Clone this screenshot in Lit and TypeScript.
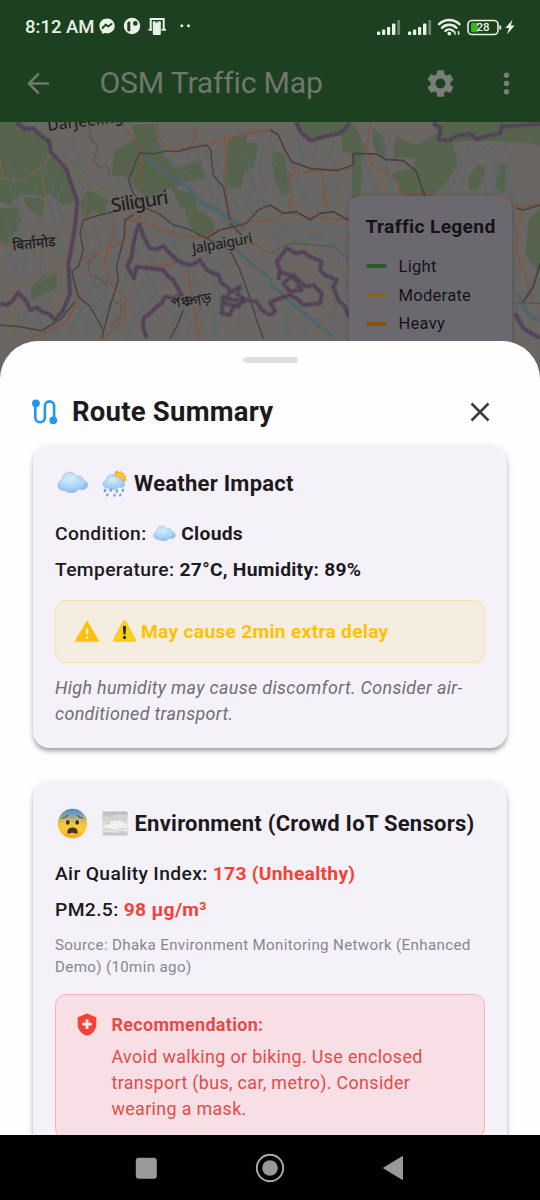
import { LitElement, html, svg, css } from "lit";
import { customElement } from "lit/decorators.js";

const BODY_FONT = css`Roboto, "Noto Sans", sans-serif`;

type Stroke = { c: string; w: number; d: string[] };

const WEST_FOREST = [
  "M0 6H55L120 50L150 60L165 130L205 170L225 240L190 250L150 215L130 225L60 215L30 250L0 240Z",
  "M0 270L50 265L60 300L25 365L0 360Z",
  "M75 235L130 240L125 285L90 265Z",
  "M345 95L410 60L400 20L460 15L470 70L490 110L520 150L600 125L610 170L540 190L500 205L470 235L430 225L385 170L340 160Z",
  "M690 60L735 50L740 110L720 200L680 205Z",
  "M95 505L140 465L165 460L165 500L100 535Z",
  "M265 215L320 240L310 280L275 270L255 300L245 250Z",
  "M515 195L540 215L580 225L590 270L545 260Z",
  "M560 275L610 280L635 305L640 340L600 350L575 320Z",
  "M745 70L770 75L760 140L742 150Z",
];
const WEST_WATER: Stroke[] = [
  { c: "#50656c", w: 14, d: ["M530 180L570 205L605 250L650 270L700 300L735 325"] },
  { c: "#50656c", w: 9, d: ["M700 380L740 420L790 460L815 480", "M430 110L480 150L530 180"] },
  {
    c: "#56686d",
    w: 4,
    d: [
      "M170 80L230 140L290 190L350 240L380 280",
      "M20 120L45 160L30 210L60 250L50 330L80 380L70 450L95 520L75 590L100 650",
      "M110 190L100 240L125 290L105 340L130 400L120 450L150 520",
      "M190 190L170 250L190 300L165 350L185 400",
      "M215 60L240 120L225 160L250 210",
      "M240 320L265 360L255 420L290 460L270 520L230 590L200 650",
      "M285 320L300 380L280 430",
      "M350 300L345 350L370 380L330 440L320 510L270 580L250 655",
      "M380 460L360 520L370 570L345 640",
      "M440 330L430 380L460 420L440 460L470 520L440 560",
      "M440 480L410 520L430 560L390 620L380 658",
      "M470 330L520 370L560 440L580 480L600 530L640 590L650 655",
      "M500 300L560 345L620 400L640 440L690 500",
      "M530 370L510 340L540 300",
      "M600 60L590 120L630 190L640 250",
      "M645 110L690 200L650 240L670 300L720 350",
      "M740 110L760 190L740 250L770 300",
      "M790 70L780 150L795 220L760 260",
      "M765 120L745 170L780 230L800 260",
      "M300 510L330 560L300 600L310 655",
      "M590 480L610 540L590 590L620 655",
      "M500 560L540 600L520 655",
      "M20 390L50 440L30 480",
      "M150 540L110 580L140 650",
      "M680 420L640 470L660 530L640 640",
      "M740 560L710 600L730 650",
      "M470 60L520 130L560 190",
      "M210 10L280 60L240 90",
      "M350 170L370 200L410 205L450 250",
      "M720 520L750 480L800 500",
      "M180 500L240 480L290 500L340 480",
      "M60 120L85 160L70 200L90 240",
      "M145 100L135 150L160 200L150 260L165 310",
      "M15 300L30 340L15 380",
      "M45 560L60 600L40 650",
      "M400 330L420 370L405 400",
      "M620 90L625 130L650 160L660 210",
      "M575 80L560 110L575 140",
      "M440 60L480 100L540 140L600 200",
      "M700 230L715 270L745 290L790 290",
      "M540 390L545 440L530 480",
      "M550 560L570 610L560 655",
      "M180 590L160 620L175 655",
    ],
  },
];
const WEST_ROADS: Stroke[] = [
  {
    c: "#7b6547",
    w: 4,
    d: [
      "M0 175L60 180L115 152L150 105L175 55",
      "M125 150L135 230L130 290L110 335",
      "M190 120L215 130L225 165L270 195L330 215L375 260",
      "M110 340L160 335L225 345",
      "M40 655L35 492L120 485L195 440L130 395L60 375",
      "M195 440L185 520L155 600",
      "M0 120L10 175",
      "M340 300L400 270L460 285L445 315",
      "M260 225L250 330",
    ],
  },
  {
    c: "#85543f",
    w: 4.5,
    d: [
      "M365 15L395 50L420 90L425 150L415 225L420 300",
      "M470 10L475 45L490 75L520 88L560 85L640 70L740 40L810 30",
      "M675 50L680 110L672 170L680 230L690 300L740 360L810 400",
      "M340 280L342 320L335 360L315 420L320 480L380 540L370 600L310 655",
      "M0 370L40 380",
      "M385 300L460 315L510 340L600 355L650 330L730 320L740 305L810 300",
      "M245 420L290 395L340 380L375 360L380 320",
      "M90 655L150 630L200 605L235 540L215 450",
      "M560 440L575 520L585 590L595 655",
      "M400 440L510 435L550 420",
      "M415 320L400 380L395 430",
      "M580 20L590 50L570 80",
    ],
  },
  {
    c: "#6b5049",
    w: 3.5,
    d: ["M265 15L275 60L295 80L280 120L300 140L320 135L330 165", "M290 405L265 425L270 465L300 475L320 495", "M330 540L365 555L360 590L330 620", "M690 375L730 360"],
  },
  {
    c: "#484544",
    w: 4.5,
    d: [
      "M420 95L385 180L400 220L440 265L475 280L520 315L560 325L620 355L660 330L740 310L775 270L810 255",
      "M420 98L460 102L500 93L530 95L570 85L620 75L632 90L640 165L670 200L690 300",
      "M340 275L300 285L250 300L240 340L250 390L235 440L215 455L235 530L270 560L310 630",
      "M400 285L375 300L372 350L350 440L355 480L330 560L305 655",
      "M0 615L60 620L125 632L185 595L225 545",
      "M620 355L690 390L720 450L745 520L770 600L790 655",
      "M550 570L530 620L510 655",
      "M690 310L725 345",
    ],
  },
];
const WEST_BORDER = [
  "M50 8L75 28L100 25L120 45L148 65L152 95L175 120L200 150L215 195L232 245L225 320L215 380L205 430L210 520L190 570L165 600L145 580L125 575L110 562L90 570L80 545L55 518L35 545L20 555L0 550",
  "M418 310L408 340L400 370L395 410L382 440L402 475L410 440L490 450L505 470L520 480L545 525L520 535L495 530L485 550L470 560L450 580L430 595L430 625L440 655",
  "M418 310L430 350L450 385L470 388L490 378L510 400L530 420L550 430L575 435L600 420L620 450L640 460L655 465L665 490L680 500L695 515L720 500L710 520L735 540L700 540L670 530L665 580L690 585L700 560L740 540L770 545L785 570L810 585",
  "M690 510L675 550L715 560L730 530",
];

const EAST_FOREST = [
  "M85 8L105 40L125 60L210 35L240 8Z",
  "M220 30L250 20L285 90L270 110L268 230L250 230L250 100L220 90Z",
  "M380 55L440 80L500 45L545 70L560 130L530 180L480 230L400 220L370 160L430 150L445 110L375 110Z",
  "M500 12L810 10V75L780 65L690 60L600 58L510 65Z",
  "M600 170L625 138L645 145L620 210L600 205Z",
  "M10 100L40 105L55 220L35 215L15 170Z",
  "M690 130L705 140L700 215L680 200Z",
  "M780 300L810 270V450L790 430L770 400Z",
  "M310 30L340 60L345 110L315 85Z",
];
const EAST_WATER: Stroke[] = [
  { c: "#50656c", w: 12, d: ["M0 490L40 525L100 580L190 650", "M740 520L780 590L810 600"] },
  {
    c: "#56686d",
    w: 4,
    d: [
      "M80 40L95 110L80 190L90 230L130 245",
      "M0 40L15 130L60 160L50 230",
      "M120 180L100 220L115 240",
      "M270 60L290 140L310 190L330 230",
      "M300 20L340 70L350 140L370 210",
      "M150 170L190 220L210 180L230 150",
      "M640 80L680 130L665 190L700 230",
      "M610 70L650 110L640 190L655 230",
      "M700 50L720 110L710 190L740 250",
      "M560 110L590 160L560 220",
      "M575 120L550 190L530 230",
      "M0 310L60 320L120 310L180 325L235 345",
      "M0 340L50 350L120 340L190 375L235 380",
      "M10 290L40 320L90 370L150 345L235 390",
      "M150 410L190 450L175 500L200 560L180 600L210 650",
      "M60 560L40 600L60 655",
      "M90 590L110 655",
      "M130 600L190 590L230 620",
      "M730 300L745 350L735 420L730 520",
      "M735 560L770 630",
      "M800 450L780 500L790 550",
      "M190 60L180 110L195 145",
      "M140 70L130 120L150 145",
      "M20 250L40 230L30 170",
      "M280 110L275 170L290 225",
      "M590 75L600 110L625 130",
      "M655 70L690 115L690 170",
      "M60 340L75 365L60 385",
      "M20 320L15 350L30 380",
      "M200 400L215 450L230 500",
    ],
  },
];
const EAST_ROADS: Stroke[] = [
  {
    c: "#7b6547",
    w: 4,
    d: [
      "M210 260L205 225L220 180L240 150",
      "M320 150L330 180L345 205L345 230",
      "M70 385L140 400L170 440L235 445",
      "M50 430L110 450L150 490L235 580",
      "M150 655L165 590L190 570",
      "M350 10L380 20",
    ],
  },
  {
    c: "#85543f",
    w: 4.5,
    d: [
      "M300 8L290 90L310 140L350 160L380 180L390 215L480 220",
      "M60 270L65 220L55 165L150 150L240 145",
      "M150 150L165 200L160 240L175 265",
      "M0 305L50 275L110 290L220 300",
      "M720 255L760 262L810 250",
      "M755 270L740 340L745 410L770 480L785 540",
      "M65 130L78 160",
    ],
  },
  {
    c: "#48413f",
    w: 5,
    d: [
      "M0 30L25 45L45 90L65 125L120 145L200 152L250 135L250 100L320 102L345 118L400 122L440 155L450 190L465 228",
      "M0 255L40 280L80 275L120 300L150 280L190 275L235 300",
      "M740 265L760 270L810 255",
      "M760 545L790 500L810 430",
    ],
  },
  { c: "#4b4f4d", w: 2.5, d: ["M0 400L60 370L100 372L190 380L235 415", "M730 548L810 550"] },
];
const EAST_BORDER = [
  "M78 8L95 40L122 62L160 50L210 40L240 10",
  "M490 10L512 25L508 60L540 60L560 48L600 42L620 58L650 48L690 40L695 20L810 12",
  "M0 585L15 575L0 545L60 525L80 535L100 555L150 550L155 520L130 495L110 500L95 490L70 465L40 490L60 515L95 510L80 490",
  "M25 480L30 450L20 425L50 385L80 400L100 395L120 410L155 425L150 450L165 465L200 480L190 500L205 540L225 560L235 590",
  "M25 455L60 465L90 490",
  "M735 580L760 625L810 655",
];

const strokes = (groups: Stroke[]) =>
  groups.map(
    (g) => svg`<g stroke=${g.c} stroke-width=${g.w} fill="none" stroke-linejoin="round">
      ${g.d.map((d) => svg`<path d=${d}></path>`)}
    </g>`
  );
const forest = (shapes: string[]) => svg`<g fill="#56634d" stroke="#56634d" stroke-width="8" stroke-linejoin="round">${shapes.map((d) => svg`<path d=${d}></path>`)}</g>`;
const border = (lines: string[]) => svg`
  <g stroke="#58465c" stroke-width="14" fill="none" stroke-linejoin="round" opacity=".8">
    ${lines.map((d) => svg`<path d=${d}></path>`)}
  </g>
  <g stroke="#4c3f51" stroke-width="5" fill="none" stroke-dasharray="14 4">
    ${lines.map((d) => svg`<path d=${d}></path>`)}
  </g>`;

@customElement("traffic-map")
class TrafficMap extends LitElement {
  static styles = css`
    :host { display: block; height: 260px; position: relative; overflow: hidden; background: #696663; }
    .map { display: block; width: 540px; height: 260px; }
    .legend {
      position: absolute; left: 349px; top: 74px; width: 163px; height: 180px; box-sizing: border-box;
      padding: 17px 16.5px; border-radius: 11px; background: #6c6870;
      box-shadow: 0 1px 4px rgba(0, 0, 0, .25); color: #151318; font-family: ${BODY_FONT};
    }
    .legend-title { font-size: 19.25px; line-height: 28px; font-weight: 700; letter-spacing: .3px; white-space: nowrap; margin-bottom: 11px; }
    .row { display: flex; align-items: center; height: 28.7px; font-size: 16.5px; letter-spacing: .3px; gap: 11.5px; }
    .swatch { width: 21.5px; height: 4px; border-radius: 2px; }
    .light { background: #265d2b; }
    .moderate { background: #836720; }
    .heavy { background: #895407; }
  `;
  render() {
    return html`
      <svg class="map" viewBox="0 122 540 260">
        <rect y="122" width="540" height="260" fill="#696663"></rect>
        <g transform="translate(0 120) scale(.33333)">
          ${forest(WEST_FOREST)}${strokes(WEST_WATER)}${strokes(WEST_ROADS)}${border(WEST_BORDER)}
        </g>
        <g transform="translate(270 120) scale(.33333)">
          ${forest(EAST_FOREST)}${strokes(EAST_WATER)}${strokes(EAST_ROADS)}${border(EAST_BORDER)}
        </g>
        <g fill="#222121" stroke="#6c6966" stroke-width="1.6" paint-order="stroke" font-family="Noto Sans, sans-serif" font-weight="500">
          <text x="48" y="131" font-size="15.5" transform="rotate(-7 48 131)">Darjeeling</text>
          <text x="112" y="212.5" font-size="19.5" textLength="58" transform="rotate(-9 112 212.5)">Siliguri</text>
          <text x="193" y="253.5" font-size="14.5" textLength="61" transform="rotate(-10 193 253.5)">Jalpaiguri</text>
          <text x="13" y="250.5" font-size="14.5" textLength="43" lengthAdjust="spacingAndGlyphs" transform="rotate(-6 13 250.5)" font-weight="600">बिर्तामोड</text>
          <text x="172" y="308.5" font-size="14" textLength="40" lengthAdjust="spacingAndGlyphs" transform="rotate(-8 172 308.5)" font-weight="600">পঞ্চগড়</text>
        </g>
      </svg>
      <div class="legend">
        <div class="legend-title">Traffic Legend</div>
        <div class="row"><span class="swatch light"></span>Light</div>
        <div class="row"><span class="swatch moderate"></span>Moderate</div>
        <div class="row"><span class="swatch heavy"></span>Heavy</div>
      </div>
    `;
  }
}

const signal = () => html`<svg class="signal" width="25" height="17" viewBox="0 0 25 17">
  <g fill="#e9f2e7">
    <rect x="1" y="12.5" width="3.2" height="3.5" rx=".8"></rect>
    <rect x="6" y="10.5" width="3.2" height="5.5" rx=".8"></rect>
    <rect x="11" y="8" width="3.2" height="8" rx=".8"></rect>
    <rect x="16" y="4.5" width="3.4" height="11.5" rx=".8"></rect>
    <rect x="21.3" y="1" width="2.8" height="15" rx=".8" opacity=".38"></rect>
  </g></svg>`;

@customElement("top-bar")
class TopBar extends LitElement {
  static styles = css`
    :host { display: block; height: 122px; background: #1d4020; font-family: ${BODY_FONT}; }
    svg { display: block; flex: none; }
    .status { display: flex; align-items: center; height: 54px; padding: 0 25px 0 25px; box-sizing: border-box; color: #e9f2e7; }
    .time { font-size: 18.5px; font-weight: 500; letter-spacing: 0; width: 74px; white-space: nowrap; line-height: 22px; }
    .notify { display: flex; align-items: center; flex: 1; }
    .battery { display: flex; align-items: center; justify-content: center; position: relative; width: 36px; height: 17px; margin: 0 2.500px 0 4.500px; }
    .battery svg { position: absolute; left: 0; top: 0; }
    .level { position: relative; font-size: 11.5px; line-height: 17px; font-weight: 500; margin-right: 3px; }
    .signal { margin-right: 5.500px; }
    .bar { display: flex; align-items: center; height: 58px; color: #71766f; }
    .back { margin-left: 26px; }
    .title { flex: 1; margin-left: 47.5px; font-size: 30.25px; line-height: 36px; letter-spacing: -.23px; }
    .gear { margin-right: 33px; }
    .more { margin-right: 17px; }
  `;
  render() {
    return html`
      <div class="status">
        <span class="time">8:12 AM</span>
        <div class="notify">
          <svg width="96" height="20" viewBox="0 0 96 20">
            <path fill="#e9f2e7" d="M8 1.5C3.5 1.5.4 4.7.4 9c0 2.300.9 4.200 2.400 5.500L3 17l2.500-1.100c.8.2 1.600.3 2.500.3 4.500 0 7.700-3.100 7.700-7.300S12.500 1.500 8 1.500z"></path>
            <path d="M3.600 11L6.700 7.600 9.100 9.400 12.600 6.900" fill="none" stroke="#1d4020" stroke-width="1.900" stroke-linejoin="round" stroke-linecap="round"></path>
            <circle cx="33" cy="9" r="8.200" fill="#e9f2e7"></circle>
            <path d="M31.300 4.500v9.800h-1.700a1.300 1.300 0 0 1-1.300-1.300V6a1.500 1.500 0 0 1 1.500-1.500z" fill="#1d4020"></path>
            <circle cx="36.300" cy="6.400" r="2.300" fill="#1d4020"></circle>
            <path d="M51.700 12V2h13v10" fill="none" stroke="#e9f2e7" stroke-width="2"></path>
            <path d="M49.500 12.800h17.500" stroke="#e9f2e7" stroke-width="1.800"></path>
            <rect x="53" y="4" width="9.500" height="14" fill="#1d4020"></rect>
            <rect x="53.800" y="4.300" width="8" height="13.700" rx="1" fill="#e9f2e7"></rect>
            <path d="M56 5h3.500" stroke="#1d4020" stroke-width="1"></path>
            <circle cx="82.800" cy="8.700" r="1.500" fill="#e9f2e7"></circle>
            <circle cx="89.500" cy="8.700" r="1.500" fill="#e9f2e7"></circle>
          </svg>
        </div>
        ${signal()}${signal()}
        <svg width="25" height="18" viewBox="0 0 25 18">
          <g fill="none" stroke="#e9f2e7" stroke-width="2.400" stroke-linecap="round">
            <path d="M2 6.200a14.500 14.500 0 0 1 20.500 0"></path>
            <path d="M5 9.800a10.300 10.300 0 0 1 14.500 0"></path>
            <path d="M8.300 13a5.800 5.800 0 0 1 8 0"></path>
          </g>
          <circle cx="12.300" cy="15.600" r="1.900" fill="#e9f2e7"></circle>
          <path d="M18 16.800v-3.500M21.500 13v3.700M17 15l1-1.500M22.500 15l-1 1.500" stroke="#e9f2e7" stroke-width="1.300"></path>
        </svg>
        <div class="battery">
          <svg width="36" height="17" viewBox="0 0 36 17">
            <rect x="1" y="1.500" width="30" height="14" rx="4" fill="none" stroke="#e9f2e7" stroke-width="1.600"></rect>
            <path d="M6 3.700h5v9.600H6a2 2 0 0 1-2-2V5.700a2 2 0 0 1 2-2z" fill="#3bb51c"></path>
            <path d="M33.300 6.500v4" stroke="#e9f2e7" stroke-width="1.800"></path>
          </svg>
          <span class="level">28</span>
        </div>
        <svg width="10" height="16" viewBox="0 0 10 16"><path d="M7.500.8L.3 9h3.800L2 15.300 9.700 6.600H5.900z" fill="#e9f2e7"></path></svg>
      </div>
      <div class="bar">
        <svg class="back" width="26" height="26" viewBox="0 0 26 26"><path d="M23 13.500H3.500M12.800 3.500L2.900 13.500 12.800 23.500" fill="none" stroke="#71766f" stroke-width="2.500"></path></svg>
        <span class="title">OSM Traffic Map</span>
        <svg class="gear" width="33" height="33" viewBox="0 0 24 24"><path fill="#7b7d7a" d="M19.140 12.940c.04-.3.060-.61.060-.94 0-.32-.02-.64-.07-.94l2.030-1.580c.18-.14.230-.41.120-.61l-1.920-3.320c-.12-.22-.37-.29-.59-.22l-2.390.96c-.5-.38-1.030-.7-1.620-.94l-.36-2.540c-.04-.24-.24-.41-.48-.41h-3.840c-.24 0-.43.170-.47.410l-.36 2.540c-.59.240-1.130.57-1.620.94l-2.390-.96c-.22-.08-.47 0-.59.220L2.740 8.870c-.12.210-.08.470.12.610l2.030 1.580c-.05.300-.09.630-.09.940s.02.640.07.94l-2.030 1.580c-.18.140-.23.410-.12.610l1.920 3.320c.12.220.37.290.59.220l2.390-.96c.5.380 1.030.7 1.620.94l.36 2.540c.05.240.24.410.48.410h3.840c.24 0 .44-.17.470-.41l.36-2.540c.59-.24 1.130-.56 1.620-.94l2.390.96c.22.080.47 0 .59-.22l1.920-3.320c.12-.22.070-.47-.12-.61l-2.010-1.580zM12 15.600c-1.980 0-3.600-1.620-3.600-3.600s1.620-3.600 3.600-3.600 3.600 1.620 3.600 3.600-1.620 3.600-3.600 3.600z"></path></svg>
        <svg class="more" width="33" height="33" viewBox="0 0 24 24"><g fill="#7b7d7a"><circle cx="12" cy="6" r="2"></circle><circle cx="12" cy="12" r="2"></circle><circle cx="12" cy="18" r="2"></circle></g></svg>
      </div>
    `;
  }
}

const cloudPath = "M8 20C3.500 20 .8 17.800.8 14.500c0-2.700 1.800-4.700 4.300-5.100C5.200 4.500 8.200 1.300 12.500 1.300c3.300 0 5.700 1.500 7 3.900 4-.9 7 1.200 7.400 4.300 2.600.5 4.200 2.200 4.200 4.500 0 3-2.400 5-5.800 5-1.300 0-2.300-.2-3.200-.7-1.700 2.400-4.200 3.700-7.400 3.700-2.900 0-5.300-.7-6.700-2z";

const cloud = (w: number) => html`<svg width=${w} height=${(w * 24) / 32} viewBox="0 0 32 24">
  <defs><radialGradient id="sky" cx=".42" cy=".3" r=".75"><stop offset="0" stop-color="#d8eefc"></stop><stop offset=".6" stop-color="#a9d4f8"></stop><stop offset="1" stop-color="#7fb5ea"></stop></radialGradient></defs>
  <path d=${cloudPath} fill="url(#sky)" stroke="#9dbfdc" stroke-width=".7"></path>
  <path d="M5.300 10c1-1.200 3-1.700 4.700-.8M19.300 5.500c-1 .5-1.700 1.200-2 2.200M26.800 9.700c.1 1.900-.8 3.500-2.600 4.100" fill="none" stroke="#e6f4fd" stroke-width=".9" opacity=".5"></path>
</svg>`;

const rainCloud = () => html`<svg width="25" height="27" viewBox="0 0 25 27">
  <path fill="#f7a823" d="M15.500.5l1.500 2L19 .8l.9 2.500 2.600-.6-.4 2.700 2.500.6-1.500 2.100 1.500 1.900-2.200 1.200.4 2.300-5 .5-8-6 .5-3.700 2.600.3.100-2.800z"></path>
  <circle cx="17.300" cy="7.800" r="5" fill="#fdc436"></circle>
  <defs><radialGradient id="rain" cx=".45" cy=".35" r=".7"><stop offset="0" stop-color="#d8eefc"></stop><stop offset="1" stop-color="#8cc1ef"></stop></radialGradient></defs>
  <path transform="translate(.4 3.800) scale(.72)" d=${cloudPath} fill="url(#rain)" stroke="#92bde2" stroke-width=".8"></path>
  <g fill="#6aa3da"><ellipse cx="3" cy="20.500" rx="1.200" ry="1.800" transform="rotate(25 3 20.500)"></ellipse><ellipse cx="8.800" cy="20.200" rx="1.200" ry="1.800" transform="rotate(25 8.800 20.200)"></ellipse><ellipse cx="14.800" cy="21" rx="1.200" ry="1.800" transform="rotate(25 14.800 21)"></ellipse><ellipse cx="20.800" cy="20.200" rx="1.200" ry="1.800" transform="rotate(25 20.800 20.200)"></ellipse><ellipse cx="5.300" cy="25" rx="1.100" ry="1.600" transform="rotate(25 5.300 25)"></ellipse><ellipse cx="12.500" cy="25.300" rx="1.100" ry="1.500" transform="rotate(25 12.500 25.300)"></ellipse><ellipse cx="18.300" cy="25" rx="1.100" ry="1.600" transform="rotate(25 18.300 25)"></ellipse></g>
</svg>`;

const fearfulFace = () => html`<svg width="31" height="31" viewBox="0 0 31 31">
  <defs><linearGradient id="face" x1="0" y1="0" x2="0" y2="1"><stop offset="0" stop-color="#4b88d4"></stop><stop offset=".22" stop-color="#86a3ac"></stop><stop offset=".5" stop-color="#f0c63c"></stop><stop offset=".72" stop-color="#fecb31"></stop><stop offset="1" stop-color="#f1a522"></stop></linearGradient></defs>
  <circle cx="15.500" cy="15.500" r="14.700" fill="url(#face)"></circle>
  <path d="M5.500 10c2-.1 3.800-1 5-2.500M25.500 10c-2-.1-3.800-1-5-2.500" fill="none" stroke="#4e4430" stroke-width="1.200" stroke-linecap="round"></path>
  <ellipse cx="10.800" cy="14.300" rx="2.700" ry="2.900" fill="#f6dc8e"></ellipse><ellipse cx="20.200" cy="14.300" rx="2.700" ry="2.900" fill="#f6dc8e"></ellipse>
  <ellipse cx="10.800" cy="14.400" rx="2" ry="2.300" fill="#44331f"></ellipse><ellipse cx="20.200" cy="14.400" rx="2" ry="2.300" fill="#44331f"></ellipse>
  <path d="M10.500 25c-.6-3.300 1.500-5.500 5-5.500s5.600 2.200 5 5.500c-.2 1-1 .9-1.800.5-1.800-.9-4.600-.9-6.400 0-.8.400-1.600.5-1.800-.5z" fill="#493323"></path>
</svg>`;

const fog = () => html`<svg width="26" height="25" viewBox="0 0 26 25">
  <defs><linearGradient id="fog" x1="0" y1="0" x2="0" y2="1"><stop offset="0" stop-color="#b9b9bb"></stop><stop offset=".5" stop-color="#dededf"></stop><stop offset="1" stop-color="#c5c5c7"></stop></linearGradient></defs>
  <rect x=".5" y=".5" width="25" height="24" fill="url(#fog)"></rect>
  <path d="M0 6c4-3 8 2 12-1s8 0 14-2v3c-5 2-8 0-12 2S5 7 0 10z" fill="#d3d3d4"></path>
  <path d="M1 16c1-3 4-4 6-3 1-4 5-5 8-3 3-2 6 0 6 2 2 0 3 1 4 2v4c-4-2-8-1-11 1-4 0-8-4-13-1z" fill="#f0f0f1"></path>
  <path d="M1 16c1-3 4-4 6-3 1-4 5-5 8-3" fill="none" stroke="#c3c3c5" stroke-width=".7"></path>
  <path d="M1 21c6-4 9 2 14-1 4-2 7-1 10 0" stroke="#e9e9ea" stroke-width="1.600" fill="none"></path>
</svg>`;

@customElement("app-root")
class AppRoot extends LitElement {
  static styles = css`
    :host { display: grid; grid-template-rows: 122px 1013px 65px; width: 540px; height: 1200px; overflow: hidden; font-family: ${BODY_FONT}; color: #1c1a20; background: #000; }
    svg { display: block; flex: none; }
    .stage { display: grid; grid-template: 1fr / 1fr; overflow: hidden; min-height: 0; }
    .stage > * { grid-area: 1 / 1; min-width: 0; }
    .sheet { margin-top: 218.500px; position: relative; background: #fefefe; border-radius: 38px 38px 0 0; overflow: hidden; padding: 16.500px 33px 0; min-height: 0; height: 794.500px; box-sizing: border-box; }
    .handle { width: 55px; height: 5.500px; border-radius: 3px; background: #e0e0e0; margin: 0 auto; }
    .head { display: flex; align-items: center; height: 50px; margin-top: 24px; padding: 0 16.500px 0 0; }
    .head .route { margin-left: -1px; }
    .head h1 { flex: 1; margin: 0 0 0 14px; font-size: 27.500px; line-height: 36px; font-weight: 700; letter-spacing: .22px; }
    .card { background: #f5f1f9; border-radius: 16.500px; padding: 22px; box-sizing: border-box; box-shadow: 0 4px 4px -1px rgba(0, 0, 0, .28), 0 2px 7px rgba(0, 0, 0, .16); }
    .weather { margin-top: 9px; height: 302.500px; }
    .env { margin-top: 34px; height: 420px; padding-top: 25.500px; }
    .card-title { display: flex; align-items: center; height: 31px; font-size: 22px; font-weight: 700; letter-spacing: .24px; white-space: nowrap; }
    .card-title .lead { margin-left: 1.500px; }
    .card-title .mini { margin: 0 7px 0 14px; }
    .line { display: flex; align-items: center; height: 28px; font-size: 19.250px; font-weight: 500; letter-spacing: .36px; white-space: pre; }
    .line b { font-weight: 700; letter-spacing: .28px; }
    .line svg { margin: 0 5.500px 0 1px; }
    .weather .line { margin-top: 8px; }
    .weather .line.first, .env .line.first { margin-top: 21px; }
    .env .line { margin-top: 8px; }
    .red { color: #f44336; }
    .alert { display: flex; align-items: center; margin-top: 16px; height: 63px; box-sizing: border-box; padding: 0 17.500px; border: 1.400px solid #fbdf9f; border-radius: 11px; background: #f6ede1; color: #ffc107; font-size: 19.250px; font-weight: 700; letter-spacing: .26px; white-space: nowrap; }
    .alert .tri { margin: 0 5.500px 0 13px; }
    .note { margin: 12px 0 0; font-size: 17.900px; line-height: 26.200px; font-style: italic; color: #706d73; letter-spacing: .35px; }
    .source { margin: 10.500px 0 0; font-size: 15.125px; line-height: 22px; color: #88868b; letter-spacing: .35px; white-space: nowrap; }
    .advice { display: flex; margin-top: 16px; height: 145px; box-sizing: border-box; padding: 17px 20px; border: 1.400px solid #f4b4b8; border-radius: 11px; background: #f7dfe5; color: #f44336; }
    .advice-text { margin-left: 13.500px; font-size: 17.900px; line-height: 26.200px; letter-spacing: .34px; white-space: nowrap; color: #e34b4a; }
    .advice-text b { display: block; font-weight: 700; margin-bottom: 5.500px; }
    .nav { display: flex; align-items: center; justify-content: space-between; padding: 0 136px 0 135px; background: #000; }
  `;
  render() {
    return html`
      <top-bar></top-bar>
      <div class="stage">
        <traffic-map></traffic-map>
        <section class="sheet">
          <div class="handle"></div>
          <div class="head">
            <svg class="route" width="26" height="26" viewBox="0 0 26 26">
              <path d="M3.500 4V18.500a4.800 4.800 0 0 0 9.600 0V7a4.600 4.600 0 0 1 9.200 0V22" transform="translate(-.2 0)" fill="none" stroke="#2196f3" stroke-width="2.600"></path>
              <circle cx="3.900" cy="4.300" r="3.900" fill="#2196f3"></circle><circle cx="21.300" cy="21.300" r="3.900" fill="#2196f3"></circle>
            </svg>
            <h1>Route Summary</h1>
            <svg width="22" height="22" viewBox="0 0 22 22"><path d="M2.500 2.500l17 17M19.500 2.500l-17 17" stroke="#3e3b42" stroke-width="2.500"></path></svg>
          </div>
          <article class="card weather">
            <div class="card-title"><span class="lead">${cloud(31.5)}</span><span class="mini">${rainCloud()}</span>Weather Impact</div>
            <div class="line first"><span>Condition: </span>${cloud(23)}<b>Clouds</b></div>
            <div class="line"><span>Temperature: </span><b>27°C, Humidity: 89%</b></div>
            <div class="alert">
              <svg width="26" height="22" viewBox="0 0 26 22"><path d="M13 .3L25.500 21.700H.5z" fill="#ffc107"></path><path d="M13 8.500v5.500M13 16.500v2.300" stroke="#fdf3d8" stroke-width="2.200"></path></svg>
              <svg class="tri" width="23" height="22" viewBox="0 0 23 22"><path d="M10.300 1.200a1.400 1.400 0 0 1 2.400 0L22.300 19.300a1.300 1.300 0 0 1-1.100 2H1.800a1.300 1.300 0 0 1-1.100-2z" fill="#fdd216" stroke="#e9b918" stroke-width=".7"></path><path d="M9.900 7.200c0-2 3.200-2 3.200 0l-.6 7.300h-2z" fill="#2d2b26"></path><circle cx="11.500" cy="17.500" r="1.700" fill="#2d2b26"></circle></svg>
              <span>May cause 2min extra delay</span>
            </div>
            <p class="note">High humidity may cause discomfort. Consider air-<br />conditioned transport.</p>
          </article>
          <article class="card env">
            <div class="card-title"><span class="lead">${fearfulFace()}</span><span class="mini">${fog()}</span>Environment (Crowd IoT Sensors)</div>
            <div class="line first"><span>Air Quality Index: </span><b class="red">173 (Unhealthy)</b></div>
            <div class="line"><span>PM2.5: </span><b class="red">98 µg/m³</b></div>
            <p class="source">Source: Dhaka Environment Monitoring Network (Enhanced<br />Demo) (10min ago)</p>
            <div class="advice">
              <svg width="22" height="26" viewBox="0 0 22 26"><path d="M11 1.500l9.300 3.700v7.300c0 5.300-3.900 9.800-9.300 11.300C5.600 22.300 1.700 17.800 1.700 12.500V5.200z" fill="#f44336"></path><path d="M9.600 7.500h2.800v3.300h3.300v2.800h-3.300v3.300H9.600v-3.300H6.300v-2.800h3.300z" fill="#fdebec"></path></svg>
              <div class="advice-text"><b>Recommendation:</b>Avoid walking or biking. Use enclosed<br />transport (bus, car, metro). Consider<br />wearing a mask.</div>
            </div>
          </article>
        </section>
      </div>
      <nav class="nav">
        <svg width="22" height="22" viewBox="0 0 22 22"><rect x=".8" y=".8" width="21" height="21" rx="3" fill="#999"></rect></svg>
        <svg width="30" height="30" viewBox="0 0 30 30"><circle cx="15" cy="15" r="13.200" fill="none" stroke="#aaa" stroke-width="1.900"></circle><circle cx="15" cy="15" r="7.800" fill="#999"></circle></svg>
        <svg width="22" height="26" viewBox="0 0 22 26"><path d="M20.500 1.500v23L1.500 13z" fill="#999" stroke="#999" stroke-linejoin="round"></path></svg>
      </nav>
    `;
  }
}
